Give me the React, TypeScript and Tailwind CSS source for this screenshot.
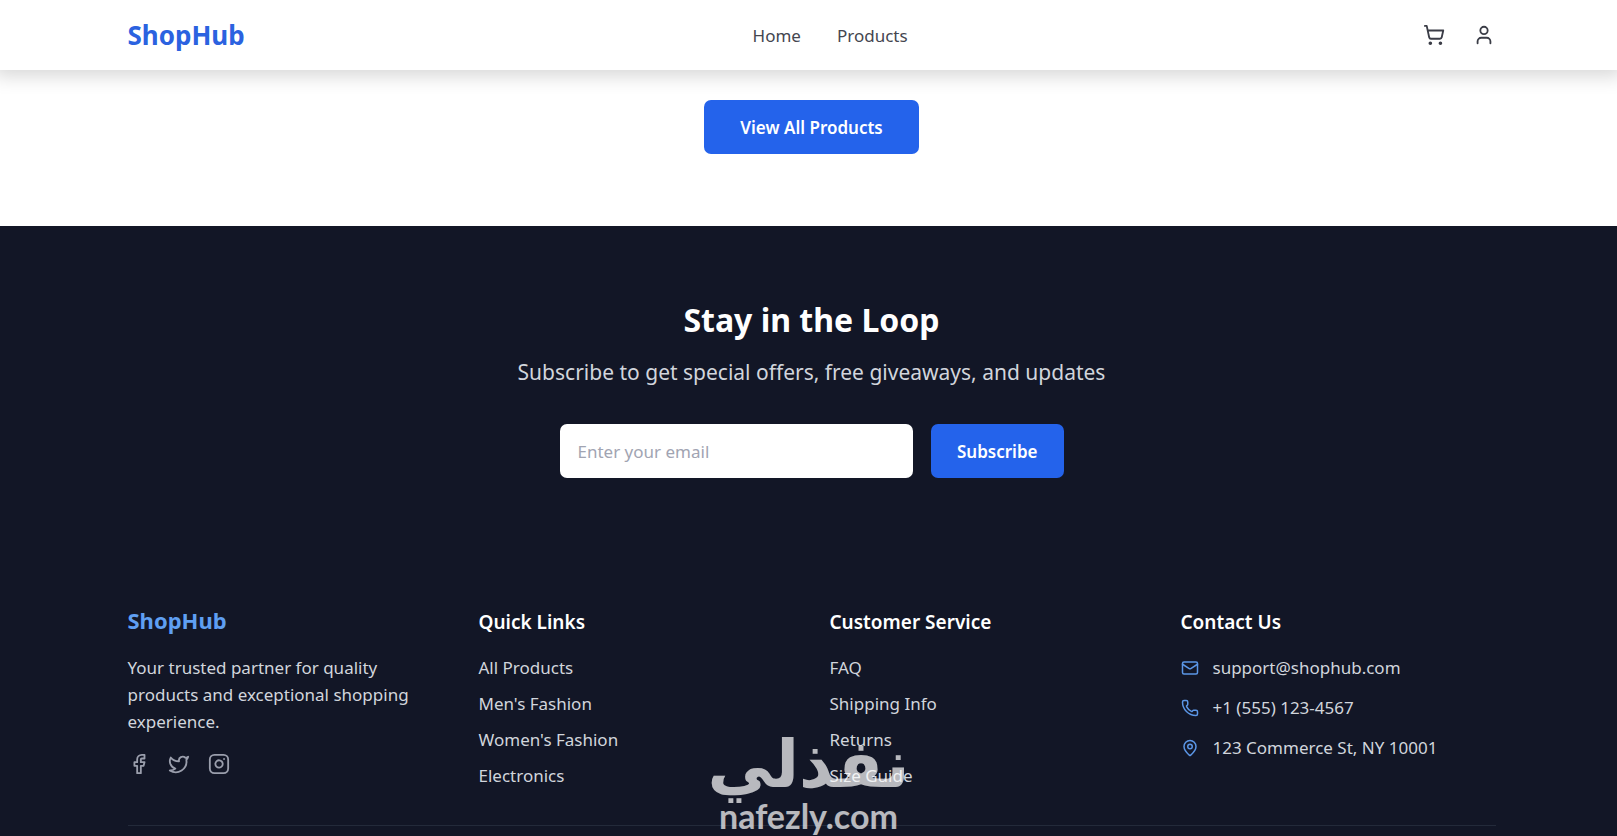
import { Facebook, Instagram, Mail, MapPin, Phone, ShoppingCart, Twitter, User } from "lucide-react";

const quickLinks = ["All Products", "Men's Fashion", "Women's Fashion", "Electronics"];

const serviceLinks = ["FAQ", "Shipping Info", "Returns", "Size Guide"];

const socials = [
  { name: "Facebook", icon: Facebook },
  { name: "Twitter", icon: Twitter },
  { name: "Instagram", icon: Instagram },
];

const contacts = [
  { icon: Mail, text: "support@shophub.com" },
  { icon: Phone, text: "+1 (555) 123-4567" },
  { icon: MapPin, text: "123 Commerce St, NY 10001" },
];

const container = "mx-auto w-full max-w-[1446px] pl-[42px] pr-9";

function Header() {
  return (
    <header className="relative z-10 bg-white shadow-[0_0_18px_6px_rgba(0,0,0,0.16)]">
      <div className={`${container} flex h-[70px] items-center justify-between`}>
        <a href="#" className="text-[26px] leading-9 font-bold text-[#2b62e0]">
          ShopHub
        </a>
        <nav className="flex gap-9 pr-2 text-[#44464f]">
          <a href="#">Home</a>
          <a href="#products">Products</a>
        </nav>
        <div className="flex items-center gap-7 text-[#3b3d47]">
          <button type="button" aria-label="Cart">
            <ShoppingCart className="size-[22px]" />
          </button>
          <button type="button" aria-label="Account">
            <User className="size-[22px]" />
          </button>
        </div>
      </div>
    </header>
  );
}

function Newsletter() {
  return (
    <section className="bg-[#121626] py-18 pl-[6px] text-center text-white">
      <h2 className="mb-[14px] text-[32px] leading-11 font-bold">Stay in the Loop</h2>
      <p className="mb-9 text-[21px] leading-8 text-gray-300">
        Subscribe to get special offers, free giveaways, and updates
      </p>
      <form className="mx-auto flex w-full max-w-[504px] gap-[18px]" onSubmit={(e) => e.preventDefault()}>
        <input
          type="email"
          aria-label="Email address"
          placeholder="Enter your email"
          className="h-[54px] min-w-0 flex-1 rounded-[7px] bg-white px-[18px] text-gray-900 placeholder:text-[#a1a4b2]"
        />
        <button type="submit" className="h-[54px] rounded-[7px] bg-[#2463eb] px-[26px] font-semibold">
          Subscribe
        </button>
      </form>
    </section>
  );
}

function LinkColumn({ title, links }: { title: string; links: string[] }) {
  return (
    <div>
      <h3 className="mb-[14px] text-[19px] leading-9 font-semibold">{title}</h3>
      <ul className="space-y-[9px] text-gray-300">
        {links.map((link) => (
          <li key={link}>
            <a href="#">{link}</a>
          </li>
        ))}
      </ul>
    </div>
  );
}

function Footer() {
  return (
    <footer className="grow bg-[#121626] pt-[54px] text-white">
      <div className={container}>
        <div className="grid grid-cols-4 gap-9">
          <div>
            <h3 className="mb-[18px] text-[22px] leading-8 font-bold text-[#5f9ff2]">ShopHub</h3>
            <p className="mb-[18px] text-gray-300">
              Your trusted partner for quality products and exceptional shopping experience.
            </p>
            <div className="flex gap-[18px] text-[#9a9eac]">
              {socials.map(({ name, icon: Icon }) => (
                <a key={name} href="#" aria-label={name}>
                  <Icon className="size-[22px]" />
                </a>
              ))}
            </div>
          </div>
          <LinkColumn title="Quick Links" links={quickLinks} />
          <LinkColumn title="Customer Service" links={serviceLinks} />
          <div>
            <h3 className="mb-[14px] text-[19px] leading-9 font-semibold">Contact Us</h3>
            <ul className="space-y-[13px] text-gray-300">
              {contacts.map(({ icon: Icon, text }) => (
                <li key={text} className="flex items-center gap-[14px]">
                  <Icon className="size-[18px] text-[#5b96e6]" />
                  <span>{text}</span>
                </li>
              ))}
            </ul>
          </div>
        </div>
        <div className="mt-9 border-t border-[#232a3a]" />
      </div>
    </footer>
  );
}

// Site stamp that floats over the bottom of the page
function Watermark() {
  return (
    <div className="pointer-events-none absolute inset-x-0 bottom-0 z-20 flex flex-col items-center text-white opacity-70">
      <span dir="rtl" lang="ar" className="font-['DejaVu_Sans'] text-[66px] leading-[62px] font-bold">
        نفذلي
      </span>
      <span className="font-[Lato] text-[34px] leading-10 font-bold">nafezly.com</span>
    </div>
  );
}

export default function App() {
  return (
    <div className="relative flex min-h-screen flex-col overflow-hidden bg-white font-['Noto_Sans',sans-serif] text-[17px] leading-[27px]">
      <Header />
      <section className="flex justify-center pt-[30px] pb-18 pl-[6px]">
        <button type="button" className="h-[54px] rounded-[7px] bg-[#2463eb] px-9 font-semibold text-white">
          View All Products
        </button>
      </section>
      <Newsletter />
      <Footer />
      <Watermark />
    </div>
  );
}
